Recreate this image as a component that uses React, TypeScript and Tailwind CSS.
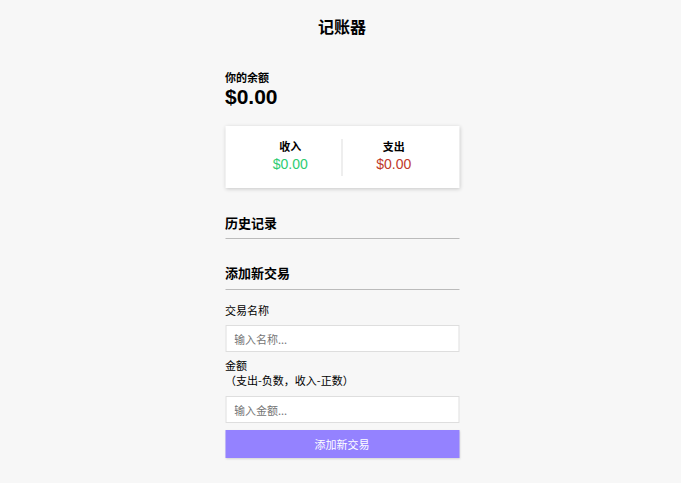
import React from "react";

const font = { fontFamily: '"Noto Sans CJK SC", "Liberation Sans", sans-serif' };

export default function App() {
  return (
    <div className="min-h-[483px] bg-[#f7f7f7] text-black" style={font}>
      <div className="pt-[16px] text-center text-[16px] font-bold leading-[20px] pl-[3px]">
        记账器
      </div>
      <div className="mx-auto w-[234px] translate-x-[1.5px] pt-[33px]">
        {/* Balance */}
        <div className="text-[11px] font-bold leading-[16px]">你的余额</div>
        <div className="text-[21px] font-bold leading-[24px] font-['Liberation_Sans']">
          $0.00
        </div>

        {/* Income / Expense */}
        <div className="mt-[17px] flex h-[62px] items-center bg-white px-[14px] shadow-[0_1px_4px_rgba(0,0,0,0.2)]">
          <div className="flex h-[37px] w-full">
            <div className="flex-1 text-center">
              <div className="text-[11px] font-bold leading-[14px]">收入</div>
              <div className="mt-[2px] text-[14px] leading-[18px] text-[#2ecc71] font-['Liberation_Sans']">
                $0.00
              </div>
            </div>
            <div className="w-px bg-[#dddddd]" />
            <div className="flex-1 text-center">
              <div className="text-[11px] font-bold leading-[14px]">支出</div>
              <div className="mt-[2px] text-[14px] leading-[18px] text-[#c0392b] font-['Liberation_Sans']">
                $0.00
              </div>
            </div>
          </div>
        </div>

        {/* History */}
        <div className="mt-[26px] border-b border-[#bbb] pb-[6px] text-[13px] font-bold leading-[18px]">
          历史记录
        </div>

        {/* Add new */}
        <div className="mt-[25px] border-b border-[#bbb] pb-[7px] text-[13px] font-bold leading-[18px]">
          添加新交易
        </div>

        <div className="mt-[12px] text-[11px] leading-[16px]">交易名称</div>
        <input
          className="mt-[7px] block h-[27px] w-full border border-[#dedede] bg-white px-[8px] text-[11px] outline-none placeholder:text-[#757575]"
          placeholder="输入名称..."
        />

        <div className="mt-[6px] text-[11px] leading-[15px]">
          金额
          <br />
          （支出-负数，收入-正数）
        </div>
        <input
          className="mt-[8px] block h-[27px] w-full border border-[#dedede] bg-white px-[8px] text-[11px] outline-none placeholder:text-[#757575]"
          placeholder="输入金额..."
        />

        <button className="mt-[7px] block h-[28px] w-full bg-[#9482ff] text-[11px] text-white shadow-[0_1px_2px_rgba(0,0,0,0.15)]">
          添加新交易
        </button>
      </div>
    </div>
  );
}
